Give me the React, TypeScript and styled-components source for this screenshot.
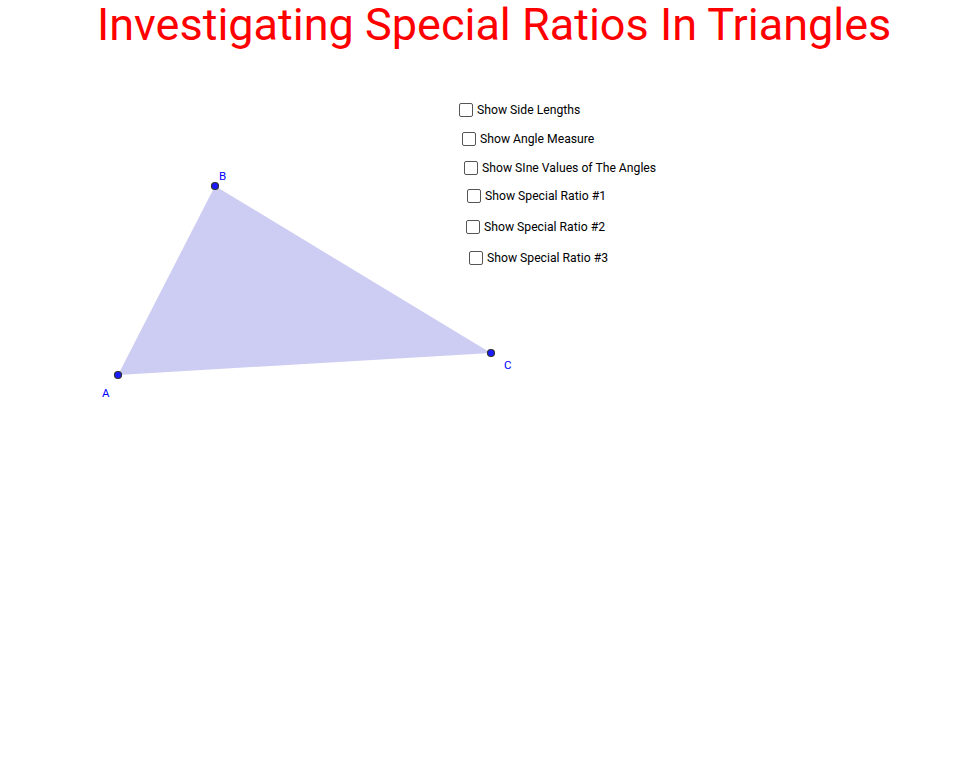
import styled, { createGlobalStyle } from "styled-components";

const GlobalStyle = createGlobalStyle`
  html, body {
    margin: 0;
    padding: 0;
    background: #fff;
  }
  body {
    font-family: Roboto, "Liberation Sans", sans-serif;
  }
`;

const Page = styled.div`
  width: 953px;
  height: 764px;
  display: flex;
  flex-direction: column;
  overflow: hidden;
  background: #fff;
`;

const Title = styled.h1`
  margin: 0;
  padding: 0 0 0 97px;
  height: 52px;
  line-height: 50px;
  font-family: Roboto, "Liberation Sans", sans-serif;
  font-weight: 400;
  font-size: 45px;
  color: #ff0000;
  white-space: nowrap;
`;

const Stage = styled.div`
  flex: 1;
  display: grid;
  grid-template: 1fr / 1fr;
`;

const Drawing = styled.svg`
  grid-area: 1 / 1;
  width: 953px;
  height: 712px;
`;

const Panel = styled.div`
  grid-area: 1 / 1;
  display: flex;
  flex-direction: column;
  align-items: flex-start;
  padding: 50px 0 0 459px;
  z-index: 1;
`;

const Row = styled.label<{ $indent: number; $gap: number }>`
  display: flex;
  align-items: center;
  gap: 4px;
  margin-left: ${(p) => p.$indent}px;
  margin-top: ${(p) => p.$gap}px;
  height: 15px;
  font-size: 12.2px;
  color: #000;
  cursor: pointer;
`;

const Box = styled.span`
  width: 12px;
  height: 12px;
  border: 1px solid #555;
  border-radius: 2px;
  background: #fff;
  flex: none;
`;

const options = [
  { text: "Show Side Lengths", indent: 0, gap: 0 },
  { text: "Show Angle Measure", indent: 3, gap: 14 },
  { text: "Show SIne Values of The Angles", indent: 5, gap: 14 },
  { text: "Show Special Ratio #1", indent: 8, gap: 13 },
  { text: "Show Special Ratio #2", indent: 7, gap: 16 },
  { text: "Show Special Ratio #3", indent: 10, gap: 16 },
];

const pts = {
  A: { x: 118, y: 375 },
  B: { x: 215, y: 186 },
  C: { x: 491, y: 353 },
};

const labels = [
  { t: "A", x: 102, y: 397 },
  { t: "B", x: 219, y: 180 },
  { t: "C", x: 504, y: 369 },
];

export default function App() {
  const off = 52;
  const P = (p: { x: number; y: number }) => `${p.x},${p.y - off}`;
  return (
    <Page>
      <GlobalStyle />
      <Title>Investigating Special Ratios In Triangles</Title>
      <Stage>
        <Drawing viewBox="0 0 953 712">
          <polygon points={`${P(pts.A)} ${P(pts.B)} ${P(pts.C)}`} fill="#cdcdf3" />
          {Object.values(pts).map((p, i) => (
            <circle key={i} cx={p.x} cy={p.y - off} r={3.5} fill="#1a1aff" stroke="#333" strokeWidth={1.2} />
          ))}
          {labels.map((l) => (
            <text
              key={l.t}
              x={l.x}
              y={l.y - off}
              fill="#0000ff"
              fontSize={11.5}
              fontFamily="Roboto, 'Liberation Sans', sans-serif"
            >
              {l.t}
            </text>
          ))}
        </Drawing>
        <Panel>
          {options.map((o) => (
            <Row key={o.text} $indent={o.indent} $gap={o.gap}>
              <Box />
              {o.text}
            </Row>
          ))}
        </Panel>
      </Stage>
    </Page>
  );
}
